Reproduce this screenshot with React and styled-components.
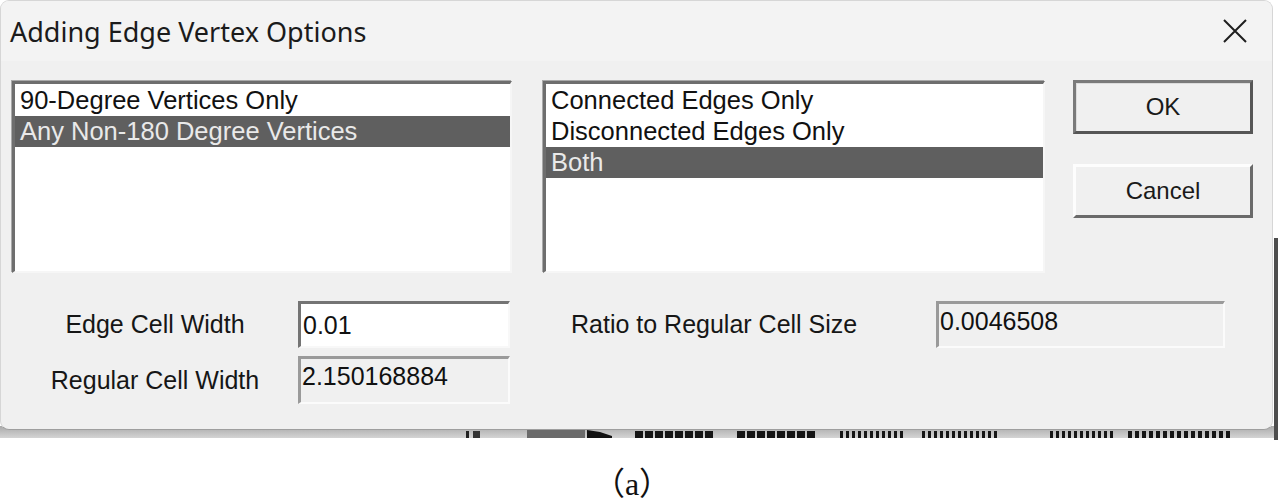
import React from 'react';
import styled, { createGlobalStyle } from 'styled-components';

const GlobalStyle = createGlobalStyle`
  html, body {
    margin: 0;
    padding: 0;
    background: #ffffff;
  }
  body {
    font-family: "Liberation Sans", Arial, sans-serif;
  }
`;

const Page = styled.div`
  width: 1278px;
  height: 501px;
  display: flex;
  flex-direction: column;
  overflow: hidden;
`;

const Screen = styled.div`
  position: relative;
  flex: none;
  height: 440px;
`;

const Backdrop = styled.svg`
  position: absolute;
  left: 0;
  top: 0;
`;

const Dialog = styled.div`
  position: relative;
  width: 1273px;
  height: 430px;
  box-sizing: border-box;
  display: flex;
  flex-direction: column;
  background: #f0f0f0;
  border: 1px solid #d6d6d6;
  border-bottom-color: #9e9e9e;
  border-radius: 9px;
  overflow: hidden;
`;

const TitleBar = styled.div`
  flex: none;
  height: 60px;
  display: flex;
  align-items: center;
  justify-content: space-between;
  padding: 0 25px 0 9px;
  background: #f3f3f3;
`;

const Title = styled.span`
  font-family: "Noto Sans", "Open Sans", sans-serif;
  font-size: 27px;
  color: #1b1b1b;
`;

const CloseIcon = styled.svg`
  display: block;
`;

const Body = styled.div`
  padding: 20px 0 0 11px;
`;

const TopRow = styled.div`
  display: flex;
  align-items: flex-start;
  height: 192px;
`;

const ListBox = styled.div`
  width: ${(p) => p.$width}px;
  height: 192px;
  margin-right: ${(p) => p.$gap}px;
  box-sizing: border-box;
  padding-top: 1px;
  background: #ffffff;
  border-style: solid;
  border-width: 3px 2px 2px 3px;
  border-color: #6e6e6e #f6f6f6 #f6f6f6 #6e6e6e;
  box-shadow: -1px -1px 0 #a9a9a9;
`;

const Item = styled.div`
  height: 31px;
  line-height: 31px;
  padding-left: 5px;
  font-size: 25.5px;
  white-space: nowrap;
  color: ${(p) => (p.$selected ? '#e9e9e9' : '#111111')};
  background: ${(p) => (p.$selected ? '#5f5f5f' : 'transparent')};
`;

const ButtonColumn = styled.div`
  width: 180px;
  margin-top: -1px;
  display: flex;
  flex-direction: column;
  gap: 30px;
`;

const Button = styled.button`
  width: 180px;
  height: 54px;
  margin: 0;
  padding: 0;
  box-sizing: border-box;
  background: #f0f0f0;
  font-family: "Liberation Sans", Arial, sans-serif;
  font-size: 24px;
  color: #1a1a1a;
  border-style: solid;
  border-width: 3px;
  border-color: ${(p) =>
    p.$default
      ? '#7a7a7a #565656 #565656 #7a7a7a'
      : '#fdfdfd #6a6a6a #6a6a6a #fdfdfd'};
  box-shadow: ${(p) => (p.$default ? 'inset 1px 1px 0 #dcdcdc' : 'none')};
`;

const Fields = styled.div`
  margin-top: 28px;
  display: grid;
  grid-template-columns: 286px 212px 61px 365px 289px;
  grid-template-rows: 47px 48px;
  row-gap: 8px;
`;

const Label = styled.div`
  grid-column: ${(p) => p.$col};
  grid-row: ${(p) => p.$row};
  align-self: center;
  text-align: ${(p) => p.$align || 'center'};
  font-size: 25px;
  color: #161616;
  white-space: nowrap;
`;

const Field = styled.div`
  grid-column: ${(p) => p.$col};
  grid-row: ${(p) => p.$row};
  box-sizing: border-box;
  display: flex;
  align-items: ${(p) => (p.$readOnly ? 'flex-start' : 'center')};
  padding: ${(p) => (p.$readOnly ? '3px 0 0 1px' : '0 0 0 2px')};
  font-size: 25px;
  color: #111111;
  background: ${(p) => (p.$readOnly ? '#f0f0f0' : '#ffffff')};
  border-style: solid;
  border-width: 3px 2px 2px 3px;
  border-color: ${(p) =>
    p.$readOnly
      ? '#9a9a9a #fbfbfb #fbfbfb #9a9a9a'
      : '#747474 #f8f8f8 #f8f8f8 #747474'};
`;

const Caption = styled.div`
  flex: 1;
  padding-top: 27px;
  padding-right: 14px;
  text-align: center;
  font-family: "Liberation Serif", "Noto Sans CJK SC", serif;
  font-size: 32px;
  line-height: 34px;
  color: #111111;
`;

const leftOptions = ['90-Degree Vertices Only', 'Any Non-180 Degree Vertices'];
const rightOptions = ['Connected Edges Only', 'Disconnected Edges Only', 'Both'];

const stripDashes = [
  [635, 713, 8, 10],
  [737, 812, 8, 10],
  [840, 905, 3, 6],
  [922, 1000, 3, 6],
  [1050, 1115, 3, 6],
  [1128, 1228, 4, 7],
];

function BehindWindow() {
  const marks = [];
  stripDashes.forEach(([from, to, w, step]) => {
    for (let x = from; x < to; x += step) {
      marks.push(<rect key={`${from}-${x}`} x={x} y={431} width={w} height={7} fill="#151515" />);
    }
  });
  return (
    <Backdrop width="1278" height="440" viewBox="0 0 1278 440">
      <defs>
        <linearGradient id="strip" x1="0" y1="0" x2="0" y2="1">
          <stop offset="0" stopColor="#a9a9a9" />
          <stop offset="1" stopColor="#d4d4d4" />
        </linearGradient>
      </defs>
      <rect x="0" y="426" width="1278" height="12" fill="url(#strip)" />
      <rect x="466" y="431" width="3" height="7" fill="#222" />
      <rect x="473" y="431" width="7" height="7" fill="#333" />
      <rect x="527" y="430" width="58" height="8" fill="#6b6b6b" />
      <polygon points="587,430 600,432 612,436 612,438 587,438" fill="#111" />
      {marks}
      <rect x="1274" y="238" width="4" height="202" fill="#4d4d4d" />
    </Backdrop>
  );
}

export default function App() {
  return (
    <>
      <GlobalStyle />
      <Page>
        <Screen>
          <BehindWindow />
          <Dialog>
            <TitleBar>
              <Title>Adding Edge Vertex Options</Title>
              <CloseIcon width="24" height="24" viewBox="0 0 24 24">
                <path d="M1 1 L23 23 M23 1 L1 23" stroke="#1e1e1e" strokeWidth="2" fill="none" />
              </CloseIcon>
            </TitleBar>
            <Body>
              <TopRow>
                <ListBox $width={500} $gap={31}>
                  {leftOptions.map((o, i) => (
                    <Item key={o} $selected={i === 1}>{o}</Item>
                  ))}
                </ListBox>
                <ListBox $width={502} $gap={28}>
                  {rightOptions.map((o, i) => (
                    <Item key={o} $selected={i === 2}>{o}</Item>
                  ))}
                </ListBox>
                <ButtonColumn>
                  <Button $default>OK</Button>
                  <Button>Cancel</Button>
                </ButtonColumn>
              </TopRow>
              <Fields>
                <Label $col={1} $row={1}>Edge Cell Width</Label>
                <Field $col={2} $row={1}>0.01</Field>
                <Label $col={4} $row={1} $align="left">Ratio to Regular Cell Size</Label>
                <Field $col={5} $row={1} $readOnly>0.0046508</Field>
                <Label $col={1} $row={2}>Regular Cell Width</Label>
                <Field $col={2} $row={2} $readOnly>2.150168884</Field>
              </Fields>
            </Body>
          </Dialog>
        </Screen>
        <Caption>（a）</Caption>
      </Page>
    </>
  );
}
